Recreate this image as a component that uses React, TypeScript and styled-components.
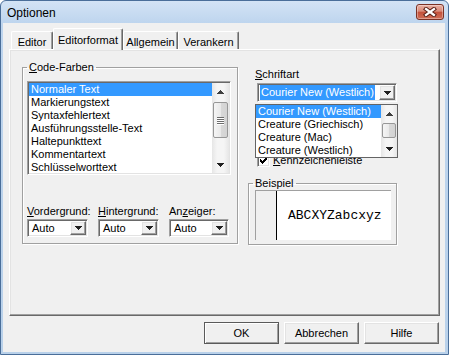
import React from "react";
import styled, { createGlobalStyle, css } from "styled-components";

const GlobalStyle = createGlobalStyle`
  html, body {
    margin: 0;
    padding: 0;
    background: #ffffff;
  }
  body {
    font-family: "Liberation Sans", Arial, sans-serif;
    font-size: 11px;
    color: #000;
  }
  * {
    box-sizing: border-box;
  }
`;

const raised = css`
  border: 1px solid;
  border-color: #ffffff #696969 #696969 #ffffff;
  box-shadow: inset -1px -1px 0 #a0a0a0, inset 1px 1px 0 #e3e3e3;
`;

const sunken = css`
  border: 1px solid;
  border-color: #a0a0a0 #ffffff #ffffff #a0a0a0;
  box-shadow: inset 1px 1px 0 #696969, inset -1px -1px 0 #e3e3e3;
`;

const Window = styled.div`
  width: 449px;
  height: 355px;
  display: flex;
  flex-direction: column;
  border: 1px solid #4a6e99;
  border-radius: 6px 6px 0 0;
  background: linear-gradient(#d3e3f5, #bed5ee 22px, #b9d1ea);
  padding: 0 3px 2px 2px;
`;

const TitleBar = styled.div`
  height: 22px;
  display: flex;
  justify-content: space-between;
  align-items: flex-start;
  padding-left: 4px;
`;

const Title = styled.div`
  margin-top: 5px;
  font-size: 12px;
  line-height: 14px;
  color: #000;
`;

const CloseButton = styled.div`
  width: 28px;
  height: 16px;
  margin: 3px 1px 0 0;
  border: 1px solid #7b3124;
  border-radius: 3px;
  background: linear-gradient(#eab0a3, #d98a78 45%, #c4503a 50%, #cf6e57);
  box-shadow: inset 0 0 0 1px rgba(255, 255, 255, 0.35);
  display: flex;
  align-items: center;
  justify-content: center;
`;

const Body = styled.div`
  flex: 1;
  background: #f0f0f0;
  padding: 5px 5px 8px 6px;
  display: flex;
  flex-direction: column;
`;

const TabStrip = styled.div`
  height: 21px;
  display: flex;
  align-items: flex-end;
  padding-left: 2px;
  position: relative;
  z-index: 1;
`;

const Tab = styled.div<{ $active?: boolean; $w: number }>`
  width: ${(p) => p.$w}px;
  height: ${(p) => (p.$active ? 22 : 18)}px;
  margin-bottom: ${(p) => (p.$active ? -1 : 0)}px;
  padding-top: ${(p) => (p.$active ? 5 : 4)}px;
  text-align: center;
  line-height: 13px;
  white-space: nowrap;
  background: #f0f0f0;
  border-top: 1px solid #ffffff;
  border-left: 1px solid #ffffff;
  border-right: 1px solid #696969;
  box-shadow: inset -1px 0 0 #a0a0a0;
  border-radius: 2px 2px 0 0;
`;

const Panel = styled.div`
  height: 267px;
  ${raised};
  padding: 11px 0 0 12px;
  display: flex;
  gap: 10px;
  align-items: flex-start;
`;

const Group = styled.fieldset<{ $w: number }>`
  width: ${(p) => p.$w}px;
  min-width: 0;
  margin: 0;
  padding: 0;
  border: 1px solid #a0a0a0;
  box-shadow: 1px 1px 0 #ffffff, inset 1px 1px 0 #ffffff;
`;

const GroupLegend = styled.legend`
  margin-left: 4px;
  padding: 0 2px;
  font-size: 11px;
  line-height: 13px;
`;

const GroupBody = styled.div`
  padding: 7px 0 6px 4px;
`;

const Key = styled.span`
  text-decoration: underline;
`;

const ListBox = styled.div`
  width: 204px;
  height: 94px;
  ${sunken};
  padding: 1px;
  background: #ffffff;
  display: flex;
  overflow: hidden;
`;

const Items = styled.div`
  flex: 1;
  overflow: hidden;
`;

const ListItem = styled.div<{ $selected?: boolean }>`
  height: 13px;
  line-height: 13px;
  padding-left: 2px;
  white-space: nowrap;
  background: ${(p) => (p.$selected ? "#3399ff" : "transparent")};
  color: ${(p) => (p.$selected ? "#ffffff" : "#000000")};
`;

const ScrollBar = styled.div<{ $w: number }>`
  width: ${(p) => p.$w}px;
  display: flex;
  flex-direction: column;
  align-items: center;
  background: linear-gradient(to right, #e6e6e6, #f5f5f5 30%, #f5f5f5 70%, #e6e6e6);
`;

const ScrollArrow = styled.div`
  height: 17px;
  width: 100%;
  display: flex;
  align-items: center;
  justify-content: center;
`;

const Thumb = styled.div<{ $top: number; $h: number }>`
  margin-top: ${(p) => p.$top}px;
  height: ${(p) => p.$h}px;
  width: calc(100% - 2px);
  border: 1px solid #979797;
  border-radius: 2px;
  background: linear-gradient(to right, #f5f5f5, #e9e9e9 50%, #d8d8d8 51%, #d3d3d3);
  display: flex;
  flex-direction: column;
  align-items: center;
  justify-content: center;
  gap: 1px;
`;

const Grip = styled.div`
  width: 7px;
  height: 1px;
  background: #6b6b6b;
  box-shadow: 0 1px 0 #ffffff;
`;

const Spacer = styled.div`
  flex: 1;
`;

const ColorGrid = styled.div`
  margin-top: 30px;
  display: grid;
  grid-template-columns: 61px 61px 61px;
  column-gap: 10px;
  row-gap: 1px;
`;

const FieldLabel = styled.div`
  line-height: 13px;
  white-space: nowrap;
`;

const Combo = styled.div<{ $w: number; $h: number }>`
  width: ${(p) => p.$w}px;
  height: ${(p) => p.$h}px;
  ${sunken};
  padding: 1px;
  background: #ffffff;
  display: flex;
  align-items: stretch;
`;

const ComboText = styled.div`
  flex: 1;
  padding-left: 3px;
  display: flex;
  align-items: center;
  white-space: nowrap;
`;

const Selection = styled.span`
  margin-left: -2px;
  padding: 0 1px;
  line-height: 15px;
  background: #3399ff;
  color: #ffffff;
`;

const DropButton = styled.div<{ $w: number }>`
  width: ${(p) => p.$w}px;
  background: #f0f0f0;
  ${raised};
  display: flex;
  align-items: center;
  justify-content: center;
`;

const RightColumn = styled.div`
  width: 149px;
  display: flex;
  flex-direction: column;
`;

const FontLabel = styled.div`
  margin-top: 7px;
  padding-left: 7px;
  line-height: 13px;
`;

const FontCombo = styled.div`
  position: relative;
  margin: 2px 0 0 9px;
`;

const Popup = styled.div`
  position: absolute;
  top: 21px;
  left: -2px;
  z-index: 2;
  width: 143px;
  height: 54px;
  border: 1px solid #646464;
  background: #ffffff;
  display: flex;
`;

const CheckRow = styled.div`
  margin-top: 52px;
  padding-left: 9px;
  height: 13px;
  display: flex;
  align-items: center;
  gap: 3px;
  line-height: 13px;
`;

const CheckBox = styled.div`
  width: 13px;
  height: 13px;
  ${sunken};
  background: #ffffff;
  display: flex;
  align-items: center;
  justify-content: center;
`;

const SampleGroup = styled(Group)`
  margin-top: 10px;
`;

const SampleBody = styled.div`
  padding: 0 5px 4px 6px;
`;

const Preview = styled.div`
  height: 50px;
  border-top: 1px solid #a0a0a0;
  border-left: 1px solid #a0a0a0;
  background: #ffffff;
  display: flex;
`;

const Gutter = styled.div`
  width: 21px;
  background: #f0f0f0;
  border-right: 1px solid #000000;
`;

const SampleText = styled.div`
  padding-left: 11px;
  display: flex;
  align-items: center;
  font-family: "Liberation Mono", "Courier New", monospace;
  font-size: 13px;
  color: #000;
`;

const ButtonRow = styled.div`
  margin-top: 6px;
  padding-right: 1px;
  display: flex;
  justify-content: flex-end;
  gap: 5px;
`;

const Button = styled.div<{ $default?: boolean }>`
  width: 75px;
  height: 22px;
  display: flex;
  align-items: center;
  justify-content: center;
  background: #f0f0f0;
  ${(p) =>
    p.$default
      ? css`
          border: 1px solid #5a5a5a;
          box-shadow: inset 1px 1px 0 #ffffff, inset -1px -1px 0 #a0a0a0;
        `
      : raised};
`;

const DownArrow = () => (
  <svg width="7" height="4" shapeRendering="crispEdges">
    <path d="M0 0h7v1h-1v1h-1v1h-1v1h-1v-1h-1v-1h-1v-1h-1z" fill="#202020" />
  </svg>
);

const UpArrow = () => (
  <svg width="7" height="4" shapeRendering="crispEdges">
    <path d="M0 4h7v-1h-1v-1h-1v-1h-1v-1h-1v1h-1v1h-1v1h-1z" fill="#404040" />
  </svg>
);

const CheckMark = () => (
  <svg width="7" height="7" shapeRendering="crispEdges">
    <path
      d="M6 0h1v1h-1z M5 1h2v1h-2z M0 2h1v1h-1z M4 2h3v1h-3z M0 3h2v1h-2z M3 3h3v1h-3z M0 4h5v1h-5z M1 5h3v1h-3z M2 6h1v1h-1z"
      fill="#000"
    />
  </svg>
);

const CloseGlyph = () => (
  <svg width="14" height="10">
    <path d="M3 2 L11 8 M11 2 L3 8" stroke="#5c2219" strokeWidth="4.2" strokeLinecap="square" />
    <path d="M3 2 L11 8 M11 2 L3 8" stroke="#ffffff" strokeWidth="2.2" strokeLinecap="square" />
  </svg>
);

function Scroller({ w, thumbTop, thumbH }: { w: number; thumbTop: number; thumbH: number }) {
  return (
    <ScrollBar $w={w}>
      <ScrollArrow>
        <UpArrow />
      </ScrollArrow>
      <Thumb $top={thumbTop} $h={thumbH}>
        {thumbH > 20 && (
          <>
            <Grip />
            <Grip />
            <Grip />
            <Grip />
          </>
        )}
      </Thumb>
      <Spacer />
      <ScrollArrow>
        <DownArrow />
      </ScrollArrow>
    </ScrollBar>
  );
}

const codeColors = [
  "Normaler Text",
  "Markierungstext",
  "Syntaxfehlertext",
  "Ausführungsstelle-Text",
  "Haltepunkttext",
  "Kommentartext",
  "Schlüsselworttext",
];

const fonts = [
  "Courier New (Westlich)",
  "Creature (Griechisch)",
  "Creature (Mac)",
  "Creature (Westlich)",
];

const tabs = [
  { label: "Editor", w: 42 },
  { label: "Editorformat", w: 70, active: true },
  { label: "Allgemein", w: 55 },
  { label: "Verankern", w: 61 },
];

const colorFields = [
  { before: "", key: "V", after: "ordergrund:" },
  { before: "", key: "H", after: "intergrund:" },
  { before: "An", key: "z", after: "eiger:" },
];

export default function App() {
  return (
    <>
      <GlobalStyle />
      <Window>
        <TitleBar>
          <Title>Optionen</Title>
          <CloseButton>
            <CloseGlyph />
          </CloseButton>
        </TitleBar>
        <Body>
          <TabStrip>
            {tabs.map((t) => (
              <Tab key={t.label} $w={t.w} $active={t.active}>
                {t.label}
              </Tab>
            ))}
          </TabStrip>
          <Panel>
            <Group $w={216}>
              <GroupLegend>
                <Key>C</Key>ode-Farben
              </GroupLegend>
              <GroupBody>
                <ListBox>
                  <Items>
                    {codeColors.map((c, i) => (
                      <ListItem key={c} $selected={i === 0}>
                        {c}
                      </ListItem>
                    ))}
                  </Items>
                  <Scroller w={17} thumbTop={2} thumbH={36} />
                </ListBox>
                <ColorGrid>
                  {colorFields.map((f) => (
                    <FieldLabel key={f.key}>
                      {f.before}
                      <Key>{f.key}</Key>
                      {f.after}
                    </FieldLabel>
                  ))}
                  {colorFields.map((f, i) => (
                    <Combo key={f.key} $w={i === 2 ? 60 : 61} $h={18}>
                      <ComboText>Auto</ComboText>
                      <DropButton $w={16}>
                        <DownArrow />
                      </DropButton>
                    </Combo>
                  ))}
                </ColorGrid>
              </GroupBody>
            </Group>

            <RightColumn>
              <FontLabel>
                <Key>S</Key>chriftart
              </FontLabel>
              <FontCombo>
                <Combo $w={140} $h={19}>
                  <ComboText>
                    <Selection>Courier New (Westlich)</Selection>
                  </ComboText>
                  <DropButton $w={16}>
                    <DownArrow />
                  </DropButton>
                </Combo>
                <Popup>
                  <Items>
                    {fonts.map((f, i) => (
                      <ListItem key={f} $selected={i === 0}>
                        {f}
                      </ListItem>
                    ))}
                  </Items>
                  <Scroller w={16} thumbTop={1} thumbH={15} />
                </Popup>
              </FontCombo>
              <CheckRow>
                <CheckBox>
                  <CheckMark />
                </CheckBox>
                <span>
                  <Key>K</Key>ennzeichenleiste
                </span>
              </CheckRow>
              <SampleGroup $w={149}>
                <GroupLegend>Beispiel</GroupLegend>
                <SampleBody>
                  <Preview>
                    <Gutter />
                    <SampleText>ABCXYZabcxyz</SampleText>
                  </Preview>
                </SampleBody>
              </SampleGroup>
            </RightColumn>
          </Panel>
          <ButtonRow>
            <Button $default>OK</Button>
            <Button>Abbrechen</Button>
            <Button>Hilfe</Button>
          </ButtonRow>
        </Body>
      </Window>
    </>
  );
}
